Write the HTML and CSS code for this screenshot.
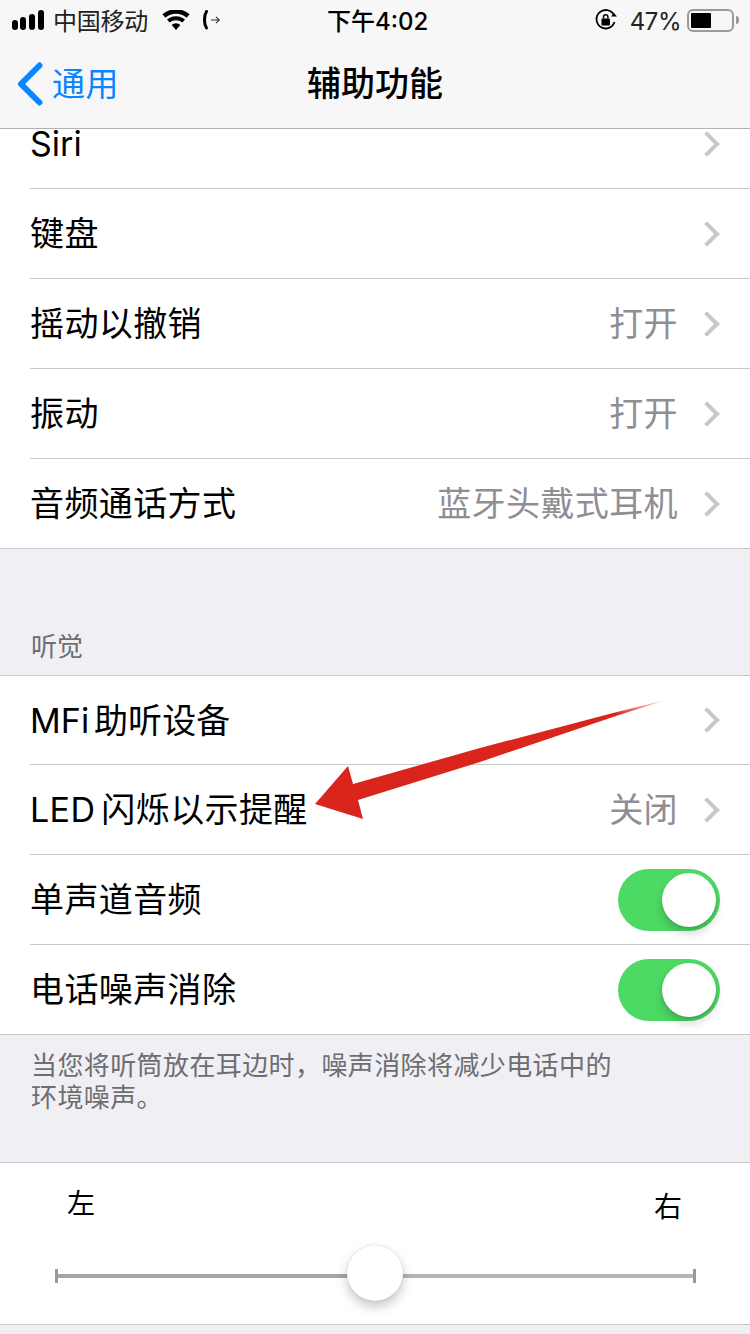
FILE: index.html
```html
<!DOCTYPE html>
<html lang="zh-CN">
<head>
  <meta charset="UTF-8" />
  <meta name="viewport" content="width=device-width, initial-scale=1.0"/>
  <title>辅助功能</title>
  <link rel="stylesheet" href="styles.css">
</head>
<body>
  <header class="top">
    <div class="status">
      <div class="status-left">
        <svg class="signal" width="33" height="20" viewBox="0 0 33 20">
          <rect x="0" y="10" width="6" height="10" rx="3"/>
          <rect x="8" y="7" width="6" height="13" rx="3"/>
          <rect x="17" y="4" width="6" height="16" rx="3"/>
          <rect x="26" y="0" width="6" height="20" rx="3"/>
        </svg>
        <span class="carrier">中国移动</span>
        <svg class="wifi" width="28" height="20" viewBox="0 0 28 20">
          <path d="M14 20 9.6 14.9a6.6 6.6 0 0 1 8.8 0Z"/>
          <path d="M7.6 12.6 5 9.6a13.5 13.5 0 0 1 18 0l-2.6 3a9.6 9.6 0 0 0-12.8 0Z"/>
          <path d="M3.4 7.7.4 4.3a20.6 20.6 0 0 1 27.2 0l-3 3.4a16.2 16.2 0 0 0-21.2 0Z"/>
        </svg>
        <svg class="call" width="20" height="20" viewBox="0 0 20 20" fill="none">
          <path d="M5.500 1.500C2.800 5.500 2.800 14 5.500 18" stroke="#000" stroke-width="3" stroke-linecap="round"/>
          <path d="M10 10h9M15 6.800l3.200 3.200-3.200 3.200" stroke="#333" stroke-width="1.100"/>
        </svg>
      </div>
      <span class="time">下午4:02</span>
      <div class="status-right">
        <svg class="rotate" width="24" height="24" viewBox="0 0 24 24" fill="none">
          <path d="M20.500 14a9.200 9.200 0 1 1-.6-7" stroke="#000" stroke-width="1.800"/>
          <path d="M23 8.500h-6l3-3.600Z" fill="#000"/>
          <rect x="7.500" y="10.500" width="8.500" height="7" rx="1" fill="#000"/>
          <path d="M9.500 10.500V9a2.200 2.200 0 0 1 4.400 0v1.500" stroke="#000" stroke-width="1.500"/>
        </svg>
        <span class="percent">47%</span>
        <div class="battery"><div class="battery-fill"></div></div>
        <div class="battery-tip"></div>
      </div>
    </div>
    <nav class="nav">
      <a class="back">
        <svg width="28" height="44" viewBox="0 0 28 44" fill="none">
          <path d="M23.500 3.500 5 22l18.500 18.500" stroke="#0a84ff" stroke-width="6" stroke-linecap="round" stroke-linejoin="round"/>
        </svg>
        <span>通用</span>
      </a>
      <h1>辅助功能</h1>
    </nav>
  </header>

  <main class="content">
    <section class="group first">
      <div class="row"><span class="label siri">Siri</span><i class="chev"></i></div>
      <div class="row"><span class="label">键盘</span><i class="chev"></i></div>
      <div class="row"><span class="label">摇动以撤销</span><span class="value">打开</span><i class="chev"></i></div>
      <div class="row"><span class="label">振动</span><span class="value">打开</span><i class="chev"></i></div>
      <div class="row"><span class="label">音频通话方式</span><span class="value">蓝牙头戴式耳机</span><i class="chev"></i></div>
    </section>

    <div class="section-title">听觉</div>
    <section class="group">
      <div class="row row-short"><span class="label mfi">MFi 助听设备</span><i class="chev"></i></div>
      <div class="row"><span class="label">LED 闪烁以示提醒</span><span class="value">关闭</span><i class="chev"></i></div>
      <div class="row"><span class="label">单声道音频</span><div class="switch"><div class="knob"></div></div></div>
      <div class="row"><span class="label">电话噪声消除</span><div class="switch"><div class="knob"></div></div></div>
    </section>
    <p class="footnote">当您将听筒放在耳边时，噪声消除将减少电话中的<br>环境噪声。</p>

    <section class="group balance">
      <div class="balance-labels"><span>左</span><span class="right">右</span></div>
      <div class="slider">
        <div class="slider-left"></div>
        <div class="slider-knob"></div>
        <div class="slider-right"></div>
      </div>
    </section>
  </main>

  <svg class="arrow" width="750" height="1334" viewBox="0 0 750 1334">
    <defs>
      <linearGradient id="arrowFade" x1="315" y1="0" x2="667" y2="0" gradientUnits="userSpaceOnUse">
        <stop offset="0.85" stop-color="#da251c"/>
        <stop offset="1" stop-color="#da251c" stop-opacity="0.1"/>
      </linearGradient>
    </defs>
    <path d="M666 700 613 713 480 748 353 784 348 766 315 804 363 819 358 800 480 762 613 717Z" fill="url(#arrowFade)"/>
  </svg>
</body>
</html>
```

FILE: styles.css
```css
* { box-sizing: border-box; }
html, body { margin: 0; padding: 0; }
body {
  width: 750px;
  height: 1334px;
  overflow: hidden;
  position: relative;
  background: #efeff4;
  color: #000;
  font-family: "Inter", "Noto Sans CJK SC", sans-serif;
}

/* status bar + nav */
.top { height: 129px; background: #f7f7f7; border-bottom: 1px solid #b2b2b2; }
.status { height: 40px; display: flex; align-items: center; justify-content: space-between; padding: 0 11px 0 12px; position: relative; font-size: 24px; }
.status-left, .status-right { display: flex; align-items: center; }
.carrier { margin-left: 8px; margin-bottom: 1px; color: #222; letter-spacing: -0.25px; }
.wifi { margin-left: 14px; }
.call { margin-left: 11px; }
.time { position: absolute; left: 327px; margin-top: -1px; font-weight: 500; }
.rotate { margin-right: 12px; }
.percent { margin-right: 6px; margin-top: 2px; color: #222; letter-spacing: -0.5px; }
.battery { width: 47px; height: 23px; border: 2px solid #9a9a9a; border-radius: 6px; padding: 2px; }
.battery-fill { width: 20px; height: 15px; background: #000; border-radius: 1px; }
.battery-tip { width: 3px; height: 8px; margin-left: 2px; background: #9a9a9a; border-radius: 0 3px 3px 0; }

.nav { height: 88px; display: flex; align-items: center; justify-content: center; position: relative; }
.nav h1 { margin: 0 0 1px; font-size: 34px; font-weight: 500; line-height: 1; }
.back { position: absolute; left: 16px; top: 0; height: 88px; display: flex; align-items: center; color: #0a84ff; font-size: 33px; }
.back span { margin-left: 8px; margin-bottom: 4px; letter-spacing: 0.5px; }

/* list */
.content { height: 1205px; overflow: hidden; }
.group { background: #fff; border-top: 1px solid #c8c7cc; border-bottom: 1px solid #c8c7cc; }
.group.first { margin-top: -31px; }
.row { height: 90px; margin-left: 30px; padding-right: 29px; display: flex; align-items: center; border-bottom: 1px solid #c8c7cc; font-size: 34px; }
.row:last-child { border-bottom: none; height: 89px; }
.row-short { height: 89px; }
.label { flex: 1; margin-bottom: 4px; letter-spacing: 0.4px; word-spacing: -4px; }
.label.siri { margin-bottom: 0; line-height: 28px; letter-spacing: 0; }
.label.mfi { letter-spacing: 0.1px; word-spacing: -5px; }
.value { margin-bottom: 4px; color: #8e8e93; letter-spacing: 0.4px; }
.chev { width: 18px; height: 18px; margin-left: 20px; margin-right: 5px; border-top: 4px solid #c7c7cc; border-right: 4px solid #c7c7cc; transform: rotate(45deg); }

.section-title { height: 126px; padding: 80px 0 0 31px; font-size: 26px; line-height: 36px; color: #6d6d72; }

.switch { width: 102px; height: 62px; padding: 4px; display: flex; justify-content: flex-end; background: #4cd964; border-radius: 31px; margin-right: 1px; }
.knob { width: 54px; height: 54px; background: #fff; border-radius: 50%; box-shadow: 0 6px 10px rgba(0, 0, 0, .18), 0 1px 2px rgba(0, 0, 0, .12); }

.footnote { margin: 0; height: 127px; padding: 15px 31px 0; font-size: 26px; line-height: 32px; letter-spacing: 0.4px; color: #6d6d72; }

/* balance slider */
.balance { height: 163px; padding: 23px 55px 0; }
.balance-labels { display: flex; justify-content: space-between; padding: 0 13px 0 12px; font-size: 28px; line-height: 36px; }
.balance-labels .right { margin-top: 3px; }
.slider { margin-top: 20px; display: flex; align-items: center; position: relative; height: 56px; border-left: 3px solid transparent; }
.slider-left { width: 289px; height: 4px; margin-top: 6px; background: #a5a5a5; }
.slider-right { flex: 1; height: 4px; margin-top: 6px; background: #b5b5b5; }
.slider::before, .slider::after { content: ""; position: absolute; top: 24px; width: 3px; height: 14px; background: #999; }
.slider::before { left: -3px; }
.slider::after { right: -1px; }
.slider-knob { width: 56px; height: 56px; flex: none; background: #fff; border-radius: 50%; box-shadow: 0 6px 12px rgba(0, 0, 0, .22), 0 0 1px rgba(0, 0, 0, .3); position: relative; z-index: 1; }

/* red annotation drawn over the screenshot */
.arrow { position: absolute; left: 0; top: 0; pointer-events: none; }
```
